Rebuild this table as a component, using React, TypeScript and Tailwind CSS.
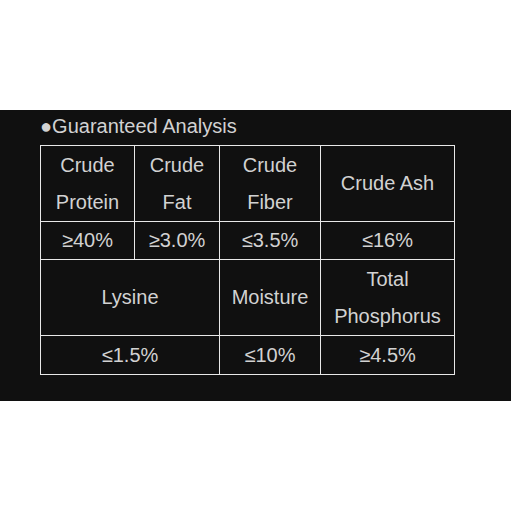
const topRow = [
  { lines: ["Crude", "Protein"] },
  { lines: ["Crude", "Fat"] },
  { lines: ["Crude", "Fiber"] },
  { lines: ["Crude Ash"] },
];

const topValues = ["≥40%", "≥3.0%", "≤3.5%", "≤16%"];

const cell = "border border-[#e8e8e8] p-0 text-center align-middle";

export default function App() {
  return (
    <div className="min-h-[511px] bg-white pt-[110px] font-['Liberation_Sans',Arial,sans-serif]">
      <div className="bg-[#101010] px-[40px] pb-[26px] text-[20px] leading-[37px] text-[#d2d2d2]">
        <h2 className="h-[35px] leading-[33px]">●Guaranteed Analysis</h2>
        <table className="w-[414px] table-fixed border-collapse">
          <colgroup>
            <col className="w-[94px]" />
            <col className="w-[85px]" />
            <col className="w-[101px]" />
            <col className="w-[134px]" />
          </colgroup>
          <tbody>
            <tr>
              {topRow.map((c, i) => (
                <td key={i} className={cell + " h-[76px]"}>
                  {c.lines.map((l) => (
                    <div key={l}>{l}</div>
                  ))}
                </td>
              ))}
            </tr>
            <tr>
              {topValues.map((v) => (
                <td key={v} className={cell + " h-[38px]"}>
                  {v}
                </td>
              ))}
            </tr>
            <tr>
              <td colSpan={2} className={cell + " h-[76px]"}>
                Lysine
              </td>
              <td className={cell}>Moisture</td>
              <td className={cell}>
                <div>Total</div>
                <div>Phosphorus</div>
              </td>
            </tr>
            <tr>
              <td colSpan={2} className={cell + " h-[39px]"}>
                ≤1.5%
              </td>
              <td className={cell}>≤10%</td>
              <td className={cell}>≥4.5%</td>
            </tr>
          </tbody>
        </table>
      </div>
    </div>
  );
}
